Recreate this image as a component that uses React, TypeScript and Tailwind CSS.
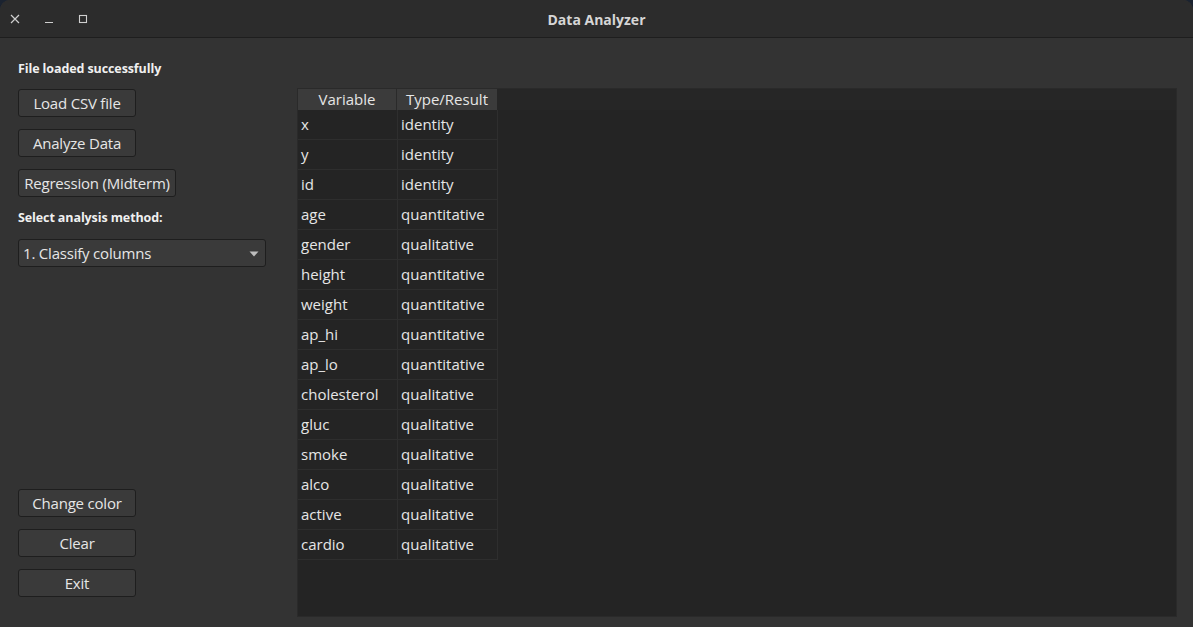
const rows: [string, string][] = [
  ['x', 'identity'],
  ['y', 'identity'],
  ['id', 'identity'],
  ['age', 'quantitative'],
  ['gender', 'qualitative'],
  ['height', 'quantitative'],
  ['weight', 'quantitative'],
  ['ap_hi', 'quantitative'],
  ['ap_lo', 'quantitative'],
  ['cholesterol', 'qualitative'],
  ['gluc', 'qualitative'],
  ['smoke', 'qualitative'],
  ['alco', 'qualitative'],
  ['active', 'qualitative'],
  ['cardio', 'qualitative'],
];

const Btn = ({ label, wide }: { label: string; wide?: boolean }) => (
  <button
    className={`h-[28px] ${wide ? 'w-[158px]' : 'w-[118px]'} rounded-[3px] border border-[#1e1e1e] bg-[#3a3a3a] text-[15px] tracking-[-0.2px] text-[#e6e6e6] leading-none`}
  >
    {label}
  </button>
);

export default function App() {
  return (
    <div className="w-[1193px] h-[627px] bg-[#1b2330] overflow-hidden" style={{ fontFamily: '"Open Sans", "Noto Sans", sans-serif' }}>
      <div className="flex flex-col w-full h-full rounded-t-[10px] overflow-hidden bg-[#333333]">
        {/* Title bar */}
        <div className="relative flex items-center h-[38px] bg-[#2c2c2c] border-b border-[#1e1e1e] shrink-0">
          <div className="flex items-center gap-[22px] pl-[10px] pt-[1px] text-[#cfcfcf]">
            <svg width="12" height="12" viewBox="0 0 12 12" className="ml-[-1px]">
              <path d="M2 2 L10 10 M10 2 L2 10" stroke="#cfcfcf" strokeWidth="1.2" />
            </svg>
            <svg width="12" height="12" viewBox="0 0 12 12">
              <path d="M2 9.5 H10" stroke="#cfcfcf" strokeWidth="1.2" />
            </svg>
            <svg width="12" height="12" viewBox="0 0 12 12">
              <rect x="2.5" y="2.5" width="7" height="7" fill="none" stroke="#cfcfcf" strokeWidth="1.1" />
            </svg>
          </div>
          <div className="absolute inset-0 flex items-center justify-center pt-[1px] text-[14px] font-bold text-[#d6d6d6] pointer-events-none">
            Data Analyzer
          </div>
        </div>

        {/* Body */}
        <div className="flex flex-1 pl-[18px] pr-[16px] pb-[10px]">
          {/* Left column */}
          <div className="flex flex-col w-[248px] shrink-0">
            <div className="mt-[22px] text-[12.5px] font-bold tracking-[-0.1px] text-[#f0f0f0] leading-[18px]">File loaded successfully</div>
            <div className="flex flex-col gap-[12px] mt-[11px] items-start">
              <Btn label="Load CSV file" />
              <Btn label="Analyze Data" />
              <Btn label="Regression (Midterm)" wide />
            </div>
            <div className="mt-[12px] text-[12.5px] font-bold tracking-[-0.1px] text-[#f0f0f0] leading-[18px]">Select analysis method:</div>
            <div className="mt-[12px] flex items-center justify-between h-[28px] w-[248px] rounded-[3px] border border-[#1e1e1e] bg-[#3a3a3a] pl-[4px] pr-[6px] pt-[1px] text-[15px] tracking-[-0.2px] text-[#e6e6e6]">
              <span>1. Classify columns</span>
              <svg width="10" height="6" viewBox="0 0 10 6">
                <path d="M0.5 0.5 H9.5 L5 5.5 Z" fill="#bdbdbd" />
              </svg>
            </div>
            <div className="flex-1" />
            <div className="flex flex-col gap-[12px] items-start mb-[20px]">
              <Btn label="Change color" />
              <Btn label="Clear" />
              <Btn label="Exit" />
            </div>
          </div>

          {/* Table */}
          <div className="ml-[31px] mt-[50px] flex-1 bg-[#242424] border border-[#2a2a2a] overflow-hidden">
            <div className="flex h-[21px] bg-[#262626]">
              <div className="w-[99px] bg-[#3b3b3b] border-r border-[#2a2a2a] text-center text-[15px] leading-[21px] text-[#e6e6e6]">Variable</div>
              <div className="w-[100px] bg-[#3b3b3b] text-center text-[15px] leading-[21px] text-[#e6e6e6]">Type/Result</div>
            </div>
            {rows.map(([v, t]) => (
              <div key={v} className="flex h-[30px]">
                <div className="w-[100px] border-r border-b border-[#2e2e2e] pl-[3px] text-[15px] leading-[29px] text-[#e6e6e6]">{v}</div>
                <div className="w-[100px] border-r border-b border-[#2e2e2e] pl-[3px] text-[15px] leading-[29px] text-[#e6e6e6]">{t}</div>
              </div>
            ))}
          </div>
        </div>
      </div>
    </div>
  );
}
